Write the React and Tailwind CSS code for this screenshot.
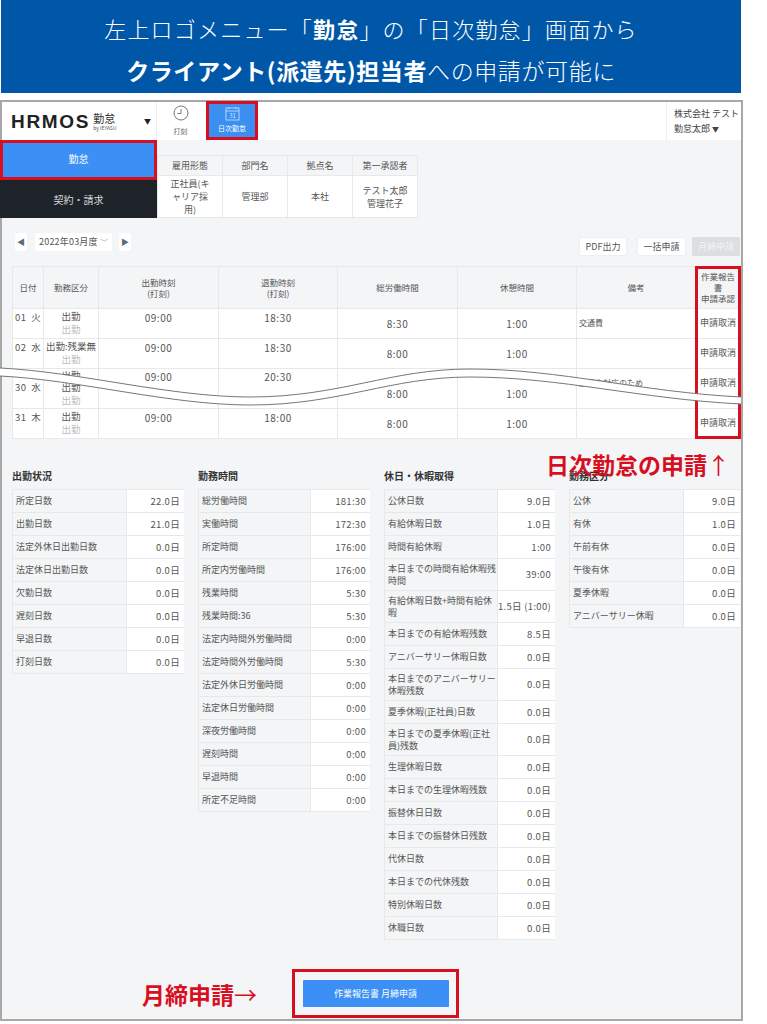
const font = { fontFamily: '"Noto Sans CJK JP", sans-serif' };
const stats1 = [["所定日数","22.0日"],["出勤日数","21.0日"],["法定外休日出勤日数","0.0日"],["法定休日出勤日数","0.0日"],["欠勤日数","0.0日"],["遅刻日数","0.0日"],["早退日数","0.0日"],["打刻日数","0.0日"]];
const stats2 = [["総労働時間","181:30"],["実働時間","172:30"],["所定時間","176:00"],["所定内労働時間","176:00"],["残業時間","5:30"],["残業時間:36","5:30"],["法定内時間外労働時間","0:00"],["法定時間外労働時間","5:30"],["法定外休日労働時間","0:00"],["法定休日労働時間","0:00"],["深夜労働時間","0:00"],["遅刻時間","0:00"],["早退時間","0:00"],["所定不足時間","0:00"]];
const stats3 = [["公休日数","9.0日"],["有給休暇日数","1.0日"],["時間有給休暇","1:00"],["本日までの時間有給休暇残時間","39:00"],["有給休暇日数+時間有給休暇","1.5日 (1:00)"],["本日までの有給休暇残数","8.5日"],["アニバーサリー休暇日数","0.0日"],["本日までのアニバーサリー休暇残数","0.0日"],["夏季休暇(正社員)日数","0.0日"],["本日までの夏季休暇(正社員)残数","0.0日"],["生理休暇日数","0.0日"],["本日までの生理休暇残数","0.0日"],["振替休日日数","0.0日"],["本日までの振替休日残数","0.0日"],["代休日数","0.0日"],["本日までの代休残数","0.0日"],["特別休暇日数","0.0日"],["休職日数","0.0日"]];
const stats4 = [["公休","9.0日"],["有休","1.0日"],["午前有休","0.0日"],["午後有休","0.0日"],["夏季休暇","0.0日"],["アニバーサリー休暇","0.0日"]];

function Stat({ title, rows, labelW, width }) {
  return (
    <div style={{ width }}>
      <div className="h-[20px] text-[10px] leading-[14px] font-bold text-[#333]">{title}</div>
      <div className="border-t border-l border-[#e6e8ea]">
        {rows.map(([k, v]) => (
          <div key={k} className="flex border-b border-[#e6e8ea] min-h-[23px]">
            <div style={{ width: labelW }} className="shrink-0 flex items-center pl-[3px] pr-px py-[3.5px] text-[9px] leading-[12px] text-[#555] bg-[#f3f5f7] border-r border-[#e6e8ea]">{k}</div>
            <div className="flex-1 bg-white flex items-center justify-end pr-[4px] text-[9.5px] tracking-[0.3px] text-[#555] whitespace-nowrap">{v}</div>
          </div>
        ))}
      </div>
    </div>
  );
}

const th = "border border-[#e6e8ea] bg-[#f3f5f7] text-[8.5px] leading-[11px] text-[#555] font-normal text-center align-middle";
const td = "border border-[#e6e8ea] bg-white text-[#555] align-top p-0 text-center";

function Row({ day, wd, kind, cin, cout, total, note, h, extra }) {
  const big = h === 40;
  return (
    <tr style={{ height: h }}>
      <td className={td + " text-left pl-[2px]"}>
        <div className={(big ? "pt-[11px]" : "pt-[1px]") + " flex text-[9.5px] tracking-[0.4px] whitespace-nowrap"}><span>{day}</span><span className="ml-[5px]">{wd}</span></div>
      </td>
      <td className={td}>
        <div className={(big ? "pt-0" : "pt-[1px]") + " text-[9.5px] leading-[12.5px] whitespace-nowrap"}>
          {extra && <div className="h-[12px]">{kind}</div>}
          <div>{kind}</div>
          <div className="text-[#b9bcc0]">出勤</div>
        </div>
      </td>
      <td className={td}><div className={(big ? "-mt-px" : "") + " text-[10px] leading-[18px] tracking-[0.5px]"}>{cin}</div></td>
      <td className={td}><div className={(big ? "-mt-px" : "") + " text-[10px] leading-[18px] tracking-[0.5px]"}>{cout}</div></td>
      <td className={td}><div className={(big ? "pt-[16px]" : "pt-[6px]") + " text-[10px] leading-[18px] tracking-[0.5px]"}>{total}</div></td>
      <td className={td}><div className={(big ? "pt-[16px]" : "pt-[6px]") + " text-[10px] leading-[18px] tracking-[0.5px]"}>1:00</div></td>
      <td className={td + " text-left pl-[2px]"}><div className="pt-[8px] text-[8px] leading-[12px]">{note}</div></td>
      <td className={td}><div className="pt-[7px] text-[9px] leading-[13px] whitespace-nowrap">申請取消</div></td>
    </tr>
  );
}

export default function App() {
  return (
    <div className="relative w-[767px] h-[1024px] bg-white overflow-hidden" style={font}>
      <div className="ml-px w-[740px] h-[93px] bg-[#0057a8] text-white text-center flex flex-col">
        <div className="h-[52px] pt-[11px] text-[22px] leading-[34px] font-light tracking-[1.2px] whitespace-nowrap">左上ロゴメニュー「<b className="font-bold">勤怠</b>」の「日次勤怠」画面から</div>
        <div className="text-[23px] leading-[36px] font-light tracking-[0.6px] whitespace-nowrap"><b className="font-bold">クライアント(派遣先)担当者</b>への申請が可能に</div>
      </div>

      <div className="mt-[7px] w-[743px] h-[921px] border-2 border-[#a8a8a8] bg-[#f3f5f7] box-border">
        {/* header */}
        <div className="flex h-[38px] bg-white">
          <div className="w-[155px] shrink-0 flex items-center pl-[9px] border-r border-[#eceef0]">
            <span className="text-[19px] font-bold tracking-[1.7px] text-[#222] leading-none" style={{ fontFamily: '"Liberation Sans", sans-serif' }}>HRMOS</span>
            <span className="ml-[3px] flex flex-col text-[#333]">
              <span className="text-[11px] leading-[13px]">勤怠</span>
              <span className="text-[5px] leading-[6px] text-[#555]">by IEYASU</span>
            </span>
            <span className="ml-auto mr-[5px] text-[7px] text-[#222]">▼</span>
          </div>
          <div className="w-[47px] flex flex-col items-center text-[#666]">
            <svg width="16" height="16" viewBox="0 0 16 16" className="mt-[3px]" fill="none" stroke="#777" strokeWidth="1"><circle cx="8" cy="8" r="7"/><path d="M8 4v4.5H4.5"/></svg>
            <span className="text-[7px] leading-[10px] mt-[5px]">打刻</span>
          </div>
          <div className="w-[52px] -mt-px h-[39px] ml-[2px] bg-[#3b8ff0] border-[3px] border-[#d70f1e] flex flex-col items-center text-white box-border">
            <svg width="15" height="15" viewBox="0 0 15 15" className="mt-[2px]" fill="none" stroke="#cfe3fb" strokeWidth="0.8"><rect x="1" y="2" width="13" height="12"/><path d="M1 5h13M4 1v2M11 1v2"/><text x="7.5" y="12" fontSize="6" fill="#cfe3fb" stroke="none" textAnchor="middle">31</text></svg>
            <span className="text-[7px] leading-[10px] mt-[2px] whitespace-nowrap">日次勤怠</span>
          </div>
          <div className="ml-auto w-[75px] border-l border-[#eceef0] pl-[7px] pt-[4px] text-[9px] leading-[15px] text-[#444] whitespace-nowrap">
            <div>株式会社 テスト</div>
            <div>勤怠太郎 <span className="text-[7px]">▼</span></div>
          </div>
        </div>

        {/* sidebar and info */}
        <div className="flex">
          <div className="w-[157px] -ml-[2px] shrink-0 text-[10px]">
            <div className="h-[40px] bg-[#3b8ff5] border-[3px] border-[#d70f1e] text-white flex items-center justify-center pb-[4px]">勤怠</div>
            <div className="h-[38px] bg-[#1e2229] text-[#d9dadc] flex items-center justify-center">契約・請求</div>
          </div>
          <table className="mt-[15px] self-start table-fixed border-collapse w-[261px] text-[9px] text-[#555]">
            <tbody>
              <tr className="h-[20px]">
                {["雇用形態","部門名","拠点名","第一承認者"].map((t) => (
                  <th key={t} className="border border-[#e6e8ea] bg-[#f3f5f7] font-normal text-[9px]">{t}</th>
                ))}
              </tr>
              <tr className="h-[42px] bg-white text-center leading-[13px]">
                <td className="border border-[#e6e8ea]">正社員(キ<br />ャリア採<br />用)</td>
                <td className="border border-[#e6e8ea]">管理部</td>
                <td className="border border-[#e6e8ea]">本社</td>
                <td className="border border-[#e6e8ea]"><div>テスト太郎</div><div>管理花子</div></td>
              </tr>
            </tbody>
          </table>
        </div>

        {/* date controls */}
        <div className="flex items-start mt-[15px] ml-[13px] h-[33px]">
          <div className="w-[12px] h-[18px] bg-white flex items-center justify-center text-[8px] text-[#5f6b76] rounded-[2px]">◀</div>
          <div className="ml-[8px] w-[77px] h-[18px] bg-white rounded-[2px] flex items-center justify-center text-[9px] text-[#555] tracking-[0.2px] whitespace-nowrap">2022年03月度<span className="ml-[3px] text-[7px] text-[#999]">﹀</span></div>
          <div className="ml-[7px] w-[12px] h-[18px] bg-white flex items-center justify-center text-[8px] text-[#5f6b76] rounded-[2px]">▶</div>
          <div className="ml-auto mt-[4px] flex text-[9px] text-[#555] mr-[1px]">
            <div className="w-[48px] h-[19px] bg-white border border-[#eceef0] rounded-[2px] flex items-center justify-center">PDF出力</div>
            <div className="ml-[10px] w-[49px] h-[19px] bg-white border border-[#eceef0] rounded-[2px] flex items-center justify-center">一括申請</div>
            <div className="ml-[6px] w-[48px] h-[19px] bg-[#dcdee1] text-[#f2f3f4] rounded-[2px] flex items-center justify-center">月締申請</div>
          </div>
        </div>

        {/* attendance table */}
        <div className="ml-[10px] relative w-[728px]">
          <table className="table-fixed border-collapse w-[728px]">
            <colgroup>
              <col className="w-[31px]" /><col className="w-[55px]" /><col className="w-[120px]" /><col className="w-[119px]" /><col className="w-[120px]" /><col className="w-[119px]" /><col className="w-[119px]" /><col className="w-[45px]" />
            </colgroup>
            <thead>
              <tr className="h-[42px]">
                <th className={th}>日付</th>
                <th className={th}>勤務区分</th>
                <th className={th}>出勤時刻<br />(打刻)</th>
                <th className={th}>退勤時刻<br />(打刻)</th>
                <th className={th}>総労働時間</th>
                <th className={th}>休憩時間</th>
                <th className={th}>備考</th>
                <th className={th}>作業報告<br />書<br />申請承認</th>
              </tr>
            </thead>
            <tbody>
              <Row h={30} day="01" wd="火" kind="出勤" cin="09:00" cout="18:30" total="8:30" note="交通費" />
              <Row h={30} day="02" wd="水" kind="出勤:残業無" cin="09:00" cout="18:30" total="8:00" />
              <Row h={40} day="30" wd="水" kind="出勤" cin="09:00" cout="20:30" total="8:00" note="顧客先対応のため" extra />
              <Row h={30} day="31" wd="木" kind="出勤" cin="09:00" cout="18:00" total="8:00" />
            </tbody>
          </table>
        </div>

        {/* summary */}
        <div className="mt-[30px] ml-[10px] flex items-start gap-[14px]">
          <Stat title="出勤状況" rows={stats1} labelW={114} width={172} />
          <Stat title="勤務時間" rows={stats2} labelW={112} width={172} />
          <Stat title="休日・休暇取得" rows={stats3} labelW={113} width={171} />
          <Stat title="勤務区分" rows={stats4} labelW={114} width={171} />
        </div>

        {/* monthly request */}
        <div className="mt-[29px] ml-[140px] flex items-center">
          <div className="w-[150px] text-[23px] leading-[30px] font-bold text-[#d70f1e] whitespace-nowrap">月締申請<span className="font-normal">→</span></div>
          <div className="w-[167px] h-[49px] border-[3px] border-[#d70f1e] flex items-center justify-center box-border">
            <div className="w-[146px] h-[27px] bg-[#3b8ff5] rounded-[1px] flex items-center justify-center text-white text-[9px]">作業報告書 月締申請</div>
          </div>
        </div>
      </div>

      {/* annotations over the screenshot */}
      <div className="absolute left-[695px] top-[266px] w-[46px] h-[173px] border-[3px] border-[#d70f1e]" />
      <div className="absolute left-[546px] top-[448px] text-[23px] leading-[32px] font-bold text-[#d70f1e] whitespace-nowrap">日次勤怠の申請<span className="font-normal">↑</span></div>
      <svg className="absolute left-0 top-0" width="742" height="440" viewBox="0 0 742 440" fill="none">
        <path d="M0 368C80 372 170 397 250 397C340 397 390 369 470 369C560 369 640 392 741 397V404C640 399 560 377 470 377C390 377 340 405 250 405C170 405 80 380 0 376Z" fill="#fff" />
        <path d="M0 368C80 372 170 397 250 397C340 397 390 369 470 369C560 369 640 392 741 397" stroke="#777" strokeWidth="1" />
        <path d="M0 376C80 380 170 405 250 405C340 405 390 377 470 377C560 377 640 399 741 404" stroke="#777" strokeWidth="1" />
      </svg>
    </div>
  );
}
